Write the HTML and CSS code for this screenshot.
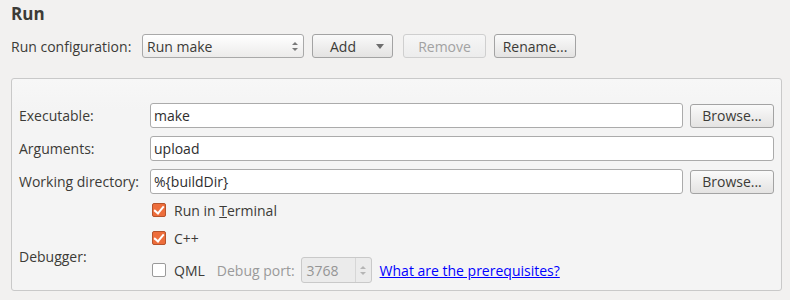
FILE: index.html
```html
<!DOCTYPE html>
<html>
<head>
<meta charset="utf-8">
<link rel="stylesheet" href="styles.css">
</head>
<body>
<div class="page">
  <h1 class="title">Run</h1>
  <div class="config-row">
    <span class="label">Run configuration:</span>
    <div class="combo"><span>Run make</span><span class="spin-arrows"><i class="up"></i><i class="down"></i></span></div>
    <button class="btn btn-add"><span>Add</span><i class="caret"></i></button>
    <button class="btn btn-remove" disabled>Remove</button>
    <button class="btn btn-rename">Rename...</button>
  </div>
  <div class="group">
    <div class="form">
      <span class="label">Executable:</span>
      <div class="input">make</div>
      <button class="btn btn-browse">Browse...</button>

      <span class="label">Arguments:</span>
      <div class="input wide">upload</div>

      <span class="label">Working directory:</span>
      <div class="input">%{buildDir}</div>
      <button class="btn btn-browse">Browse...</button>
    </div>
    <div class="checks">
      <div class="check-row first">
        <span class="cb checked"></span><span class="cb-text">Run in <u>T</u>erminal</span>
      </div>
      <div class="debugger">
        <span class="label dbg-label">Debugger:</span>
        <div class="dbg-rows">
          <div class="check-row">
            <span class="cb checked"></span><span class="cb-text">C++</span>
          </div>
          <div class="check-row qml">
            <span class="cb"></span><span class="cb-text">QML</span>
            <span class="port-label">Debug port:</span>
            <div class="spinbox"><span>3768</span><span class="spin-arrows"><i class="up"></i><i class="down"></i></span></div>
            <a class="link" href="#">What are the prerequisites?</a>
          </div>
        </div>
      </div>
    </div>
  </div>
</div>
</body>
</html>
```
FILE: styles.css
```css
html, body {
  margin: 0;
  padding: 0;
  background: #f2f1f0;
}
body {
  font-family: "Open Sans", "Noto Sans", "DejaVu Sans", sans-serif;
  font-size: 14px;
  color: #3c3b37;
  width: 790px;
  height: 300px;
  overflow: hidden;
}
.page {
  padding: 3px 8px 0 11px;
}
.title {
  margin: 0;
  font-size: 17px;
  font-weight: bold;
  line-height: 22px;
  height: 22px;
}
.label {
  white-space: nowrap;
}
.config-row {
  display: flex;
  align-items: center;
  margin-top: 9px;
  height: 24px;
}
.config-row .label {
  margin-right: 8px;
  width: 123px;
}
.combo {
  box-sizing: border-box;
  width: 162px;
  height: 24px;
  border: 1px solid #a9a9a9;
  border-radius: 3px;
  background: linear-gradient(#ffffff, #ecebea);
  display: flex;
  align-items: center;
  justify-content: space-between;
  padding: 0 5px 0 4px;
  margin-right: 8px;
}
.spin-arrows {
  display: flex;
  flex-direction: column;
  gap: 3px;
}
.spin-arrows i {
  display: block;
  width: 0;
  height: 0;
  border-left: 3px solid transparent;
  border-right: 3px solid transparent;
}
.spin-arrows .up { border-bottom: 3px solid #7a7a7a; }
.spin-arrows .down { border-top: 3px solid #7a7a7a; }
.btn {
  box-sizing: border-box;
  height: 24px;
  border: 1px solid #a3a3a3;
  border-radius: 3px;
  background: linear-gradient(#fafafa, #e4e3e2);
  font: inherit;
  color: #3c3b37;
  padding: 0;
  display: flex;
  align-items: center;
  justify-content: center;
}
.btn-add {
  width: 81px;
  margin-right: 10px;
  justify-content: flex-start;
  padding-left: 17px;
}
.btn-add .caret {
  margin-left: 20px;
  width: 0;
  height: 0;
  border-left: 4px solid transparent;
  border-right: 4px solid transparent;
  border-top: 5px solid #6e6e6e;
}
.btn-remove {
  width: 83px;
  margin-right: 8px;
  color: #a2a2a2;
  border-color: #cfcfcf;
  background: linear-gradient(#f6f6f6, #ececec);
}
.btn-rename {
  width: 82px;
}
.group {
  box-sizing: border-box;
  margin-top: 20px;
  width: 771px;
  height: 213px;
  border: 1px solid #c9c9c9;
  border-radius: 3px;
  background: linear-gradient(#f7f7f7, #f4f4f4 30px);
  padding: 24px 7px 0 7px;
}
.form {
  display: grid;
  grid-template-columns: 124px 1fr 84px;
  column-gap: 7px;
  row-gap: 8px;
  align-items: center;
}
.input {
  box-sizing: border-box;
  height: 25px;
  border: 1px solid #ababab;
  border-radius: 3px;
  background: #ffffff;
  padding: 0 3px;
  line-height: 23px;
  color: #2e2e2e;
}
.input.wide {
  grid-column: 2 / 4;
}
.btn-browse {
  width: 84px;
}
.checks {
  margin-top: 8px;
}
.check-row {
  display: flex;
  align-items: center;
  height: 16px;
  margin-left: 133px;
}
.dbg-rows .check-row {
  margin-left: 0;
}
.check-row.first {
  margin-bottom: 12px;
}
.debugger {
  display: flex;
  align-items: center;
}
.dbg-label {
  width: 133px;
}
.dbg-rows {
  display: flex;
  flex-direction: column;
  gap: 11px;
}
.cb {
  box-sizing: border-box;
  width: 14px;
  height: 14px;
  border: 1px solid #9a9a9a;
  border-radius: 2px;
  background: #ffffff;
  margin-right: 8px;
  position: relative;
  flex: none;
}
.cb.checked {
  background: #ed6d3b;
  border-color: #b5532c;
}
.cb.checked::after {
  content: "";
  position: absolute;
  left: 3px;
  top: 0px;
  width: 4px;
  height: 8px;
  border-right: 2px solid #fff;
  border-bottom: 2px solid #fff;
  transform: rotate(40deg);
}
.qml {
  height: 26px;
}
.port-label {
  margin-left: 12px;
  color: #9a9a9a;
  margin-right: 6px;
}
.spinbox {
  box-sizing: border-box;
  width: 71px;
  height: 26px;
  border: 1px solid #c9c9c9;
  border-radius: 3px;
  background: #ebebeb;
  color: #959595;
  display: flex;
  align-items: center;
  justify-content: space-between;
  padding: 0 0 0 5px;
  margin-right: 8px;
}
.spinbox .spin-arrows {
  border-left: 1px solid #d6d6d6;
  height: 100%;
  width: 15px;
  align-items: center;
  justify-content: center;
}
.spinbox .spin-arrows .up { border-bottom-color: #b5b5b5; }
.spinbox .spin-arrows .down { border-top-color: #b5b5b5; }
.link {
  color: #0000ff;
  text-decoration: underline;
}
```
